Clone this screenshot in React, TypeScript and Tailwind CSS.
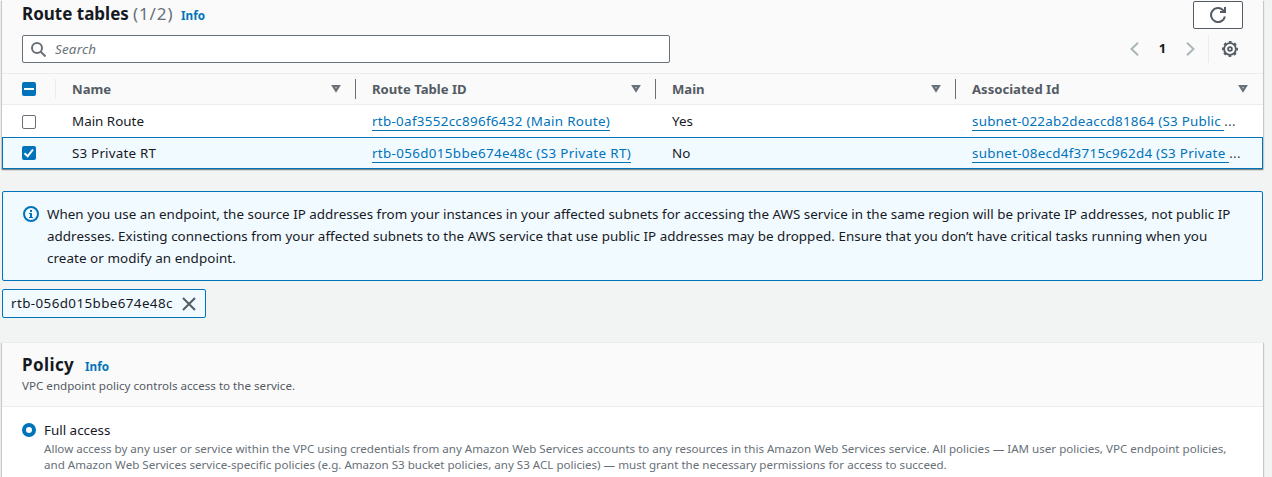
import React from "react";

const SortIcon = () => (
  <svg width="12" height="10" viewBox="0 0 12 10" fill="none" stroke="#687078" strokeWidth="2.2" className="shrink-0">
    <path d="M3.1 2.1h5.8L6 6.7z" />
  </svg>
);

const Panel = ({ className, children }: { className: string; children: React.ReactNode }) => (
  <section
    className={
      "bg-white shadow-[0_1px_1px_0_rgba(0,28,36,0.3),1px_1px_1px_0_rgba(0,28,36,0.15),-1px_1px_1px_0_rgba(0,28,36,0.15)] " +
      className
    }
  >
    {children}
  </section>
);

const HeaderCell = ({ label, last, className }: { label: string; last?: boolean; className: string }) => (
  <div className={"flex items-center justify-between pl-4 " + className}>
    <span className="mt-[2px] text-[13.1px] font-bold text-[#545b64]">{label}</span>
    <div className="flex items-center">
      <SortIcon />
      <span className={last ? "w-[14px]" : "ml-[13px] h-5 w-px bg-[#687078]"} />
    </div>
  </div>
);

const Link = ({ className, children }: { className: string; children: React.ReactNode }) => (
  <a className={"block h-[18px] whitespace-pre border-b border-[#0073bb] leading-[17px] text-[#0073bb] " + className}>
    {children}
  </a>
);

export default function App() {
  return (
    <div className="h-[477px] w-[1272px] overflow-hidden bg-[#f2f3f3] pl-[2px] font-['Noto_Sans',sans-serif] text-[13.4px] text-[#16191f]">
      <Panel className="h-[169px] w-[1261px]">
        <div className="h-[74px] border-b border-[#eaeded] bg-[#fafafa] pl-5 pr-5">
          <div className="flex h-[35px] items-start justify-between">
            <h2 className="flex items-baseline whitespace-nowrap pt-[2px] text-[17px] leading-6">
              <span className="w-[106px] font-bold">Route tables</span>
              <span className="ml-[5px] w-[48px] tracking-[0.9px] text-[#687078]">(1/2)</span>
              <a className="text-[11.7px] font-bold text-[#0073bb]">Info</a>
            </h2>
            <button className="mt-px flex h-7 w-[50px] items-center justify-center rounded-[2px] border border-[#545b64] bg-white">
              <svg width="16" height="16" viewBox="0 0 16 16" fill="none" stroke="#545b64" strokeWidth="2">
                <path d="M14.9 9.5A7 7 0 1 1 13 3.1L15 5" />
                <path d="M15 0v5h-5" />
              </svg>
            </button>
          </div>
          <div className="flex items-center justify-between">
            <div className="flex h-7 w-[648px] items-center rounded-[2px] border border-[#687078] bg-white pl-2">
              <svg width="15" height="15" viewBox="0 0 15 15" fill="none" stroke="#687078" strokeWidth="2">
                <circle cx="6" cy="6" r="5" />
                <path d="M9.5 9.5l5 5" />
              </svg>
              <span className="ml-[9px] mt-px italic tracking-[0.2px] text-[#687078]">Search</span>
            </div>
            <div className="flex h-7 items-center">
              <svg width="9" height="14" viewBox="0 0 9 14" fill="none" stroke="#aab7b8" strokeWidth="2">
                <path d="M8 .7L1.5 7 8 13.3" />
              </svg>
              <span className="w-[47px] text-center text-[13px] font-bold">1</span>
              <svg width="9" height="14" viewBox="0 0 9 14" fill="none" stroke="#aab7b8" strokeWidth="2">
                <path d="M1 .7L7.5 7 1 13.3" />
              </svg>
              <span className="ml-[13px] h-7 w-px bg-[#eaeded]" />
              <svg width="16" height="16" viewBox="0 0 16 16" fill="none" stroke="#545b64" className="ml-[13px] mr-[5px]">
                <circle cx="8" cy="8" r="5.9" strokeWidth="1.9" />
                <circle cx="8" cy="8" r="7.1" strokeWidth="1.8" strokeDasharray="2.788 2.788" strokeDashoffset="1.394" />
                <circle cx="8" cy="8" r="1.9" strokeWidth="1.8" />
              </svg>
            </div>
          </div>
        </div>

        <div className="flex h-[31px] border-b border-[#eaeded] bg-[#fafafa]">
          <div className="flex w-[54px] items-center justify-between pl-5">
            <span className="flex size-[14px] items-center justify-center rounded-[2px] bg-[#0073bb]">
              <span className="h-[2px] w-[10px] bg-white" />
            </span>
            <span className="h-5 w-px bg-[#eaeded]" />
          </div>
          <HeaderCell label="Name" className="w-[300px]" />
          <HeaderCell label="Route Table ID" className="w-[300px]" />
          <HeaderCell label="Main" className="w-[300px]" />
          <HeaderCell label="Associated Id" last className="flex-1" />
        </div>

        <div className="flex h-8 items-center pl-5">
          <span className="mt-[2px] size-[14px] rounded-[2px] border border-[#687078] bg-white" />
          <span className="ml-[36px] w-[300px]">Main Route</span>
          <span className="mt-[2px] flex w-[300px]">
            <Link className="w-[238px] tracking-[0.3px]">rtb-0af3552cc896f6432 (Main Route)</Link>
          </span>
          <span className="w-[300px]">Yes</span>
          <span className="mt-[2px] flex whitespace-nowrap">
            <Link className="w-[252px] tracking-[0.23px]">subnet-022ab2deaccd81864 (S3 Public </Link>
            <span className="text-[16px] font-light leading-[15px]">…</span>
          </span>
        </div>
        <div className="flex h-8 items-center border border-[#0073bb] bg-[#f1faff] pl-[19px]">
          <svg width="14" height="14" viewBox="0 0 14 14">
            <rect width="14" height="14" rx="2" fill="#0073bb" />
            <path d="M2.5 7.2l3.2 3L11 3.5" fill="none" stroke="#fff" strokeWidth="2" />
          </svg>
          <span className="ml-[36px] w-[300px] tracking-[0.2px]">S3 Private RT</span>
          <span className="mt-[2px] flex w-[300px]">
            <Link className="w-[259px] tracking-[0.34px]">rtb-056d015bbe674e48c (S3 Private RT)</Link>
          </span>
          <span className="w-[300px]">No</span>
          <span className="mt-[2px] flex whitespace-nowrap">
            <Link className="w-[257px] tracking-[0.28px]">subnet-08ecd4f3715c962d4 (S3 Private </Link>
            <span className="text-[16px] font-light leading-[15px]">…</span>
          </span>
        </div>
      </Panel>

      <div className="mt-[22px] flex h-[90px] w-[1261px] rounded-[2px] border border-[#0073bb] bg-[#f1faff] pl-5 pt-[11px]">
        <svg width="16" height="16" viewBox="0 0 16 16" fill="none" className="mt-[3px]">
          <circle cx="8" cy="8" r="7" stroke="#0073bb" strokeWidth="2" />
          <path d="M7 4h2v2H7zM6 7h3v4h1v1H6v-1h1V8H6z" fill="#0073bb" />
        </svg>
        <div className="ml-[8px] whitespace-nowrap leading-[22px]">
          <p className="tracking-[0.02px]">When you use an endpoint, the source IP addresses from your instances in your affected subnets for accessing the AWS service in the same region will be private IP addresses, not public IP</p>
          <p className="tracking-[0.04px]">addresses. Existing connections from your affected subnets to the AWS service that use public IP addresses may be dropped. Ensure that you don’t have critical tasks running when you</p>
          <p className="tracking-[0.07px]">create or modify an endpoint.</p>
        </div>
      </div>

      <div className="mt-2 flex h-[29px] w-[204px] items-center justify-between rounded-[2px] border border-[#0073bb] bg-[#f1faff] pl-2 pr-[9px]">
        <span className="tracking-[0.4px]">rtb-056d015bbe674e48c</span>
        <svg width="14" height="14" viewBox="0 0 14 14" stroke="#545b64" strokeWidth="2">
          <path d="M1 1l12 12M13 1L1 13" />
        </svg>
      </div>

      <Panel className="mt-6 h-[160px] w-[1261px] border-t border-[#eaeded]">
        <div className="h-[64px] border-b border-[#eaeded] bg-[#fafafa] pl-5 pt-[10px]">
          <h2 className="flex items-baseline text-[17px] leading-6">
            <span className="w-[63px] font-bold tracking-[0.4px]">Policy</span>
            <a className="text-[11.7px] font-bold text-[#0073bb]">Info</a>
          </h2>
          <p className="text-[11.61px] leading-4 text-[#545b64]">VPC endpoint policy controls access to the service.</p>
        </div>
        <div className="flex pl-5 pt-[12px]">
          <span className="mt-[4px] size-[14px] shrink-0 rounded-full border-4 border-[#0073bb] bg-white" />
          <div className="ml-2 whitespace-nowrap">
            <p className="leading-[22px]">Full access</p>
            <div className="text-[11.58px] leading-4 text-[#687078]">
              <p>Allow access by any user or service within the VPC using credentials from any Amazon Web Services accounts to any resources in this Amazon Web Services service. All policies — IAM user policies, VPC endpoint policies,</p>
              <p>and Amazon Web Services service-specific policies (e.g. Amazon S3 bucket policies, any S3 ACL policies) — must grant the necessary permissions for access to succeed.</p>
            </div>
          </div>
        </div>
      </Panel>
    </div>
  );
}
